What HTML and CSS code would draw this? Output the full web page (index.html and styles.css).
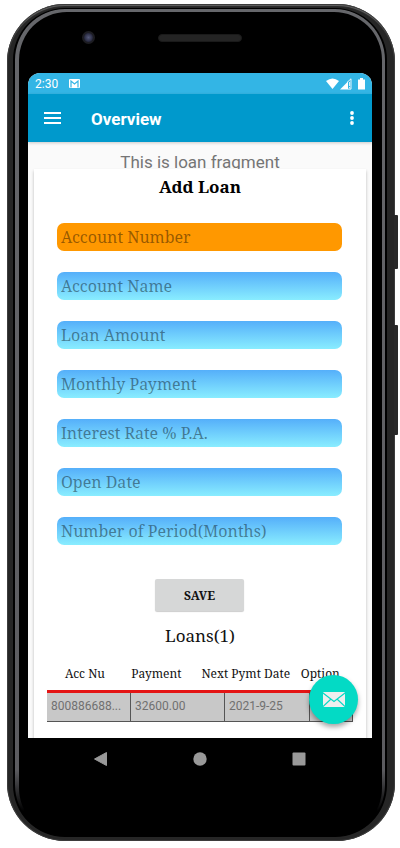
FILE: index.html
```html
<!DOCTYPE html>
<html lang="en">
<head>
<meta charset="utf-8">
<meta name="viewport" content="width=device-width, initial-scale=1">
<title>Overview</title>
<link rel="stylesheet" href="styles.css">
</head>
<body>
<div class="phone">
  <span class="side-key power"></span>
  <span class="side-key volume"></span>
  <div class="rim">
    <div class="face">
      <div class="sensors">
        <span class="camera"></span>
        <span class="speaker"></span>
      </div>
      <div class="screen">
        <div class="status-bar">
          <span>2:30</span>
          <svg class="mail-note" width="11" height="9" viewBox="0 0 11 9"><rect width="11" height="9" rx="1" fill="#fff"/><path d="M2 8.500V2l3.500 3L9 2v6.500" fill="none" stroke="#33b5e5" stroke-width="1.200"/></svg>
          <svg class="status-icons" width="39" height="12" viewBox="0 0 39 12" fill="#fff"><path d="M0 3Q6.500-2 13 3L6.500 11z"/><path d="M14 11.500L22 3.500v8z"/><path d="M21 4.500L25 .8v10.300h-3" fill="none" stroke="#fff" stroke-width=".9"/><path d="M23.200 4h.9v4h-.9zM23.200 9h.9v1.200h-.9z"/><path d="M32 1.500h2V0h3v1.500h2v10h-7z"/></svg>
        </div>
        <header class="app-bar">
          <button class="icon-button" aria-label="Open menu"><svg width="17" height="12" viewBox="0 0 17 12" fill="#fff"><path d="M0 0h17v2H0zM0 5h17v2H0zM0 10h17v2H0z"/></svg></button>
          <h1>Overview</h1>
          <button class="icon-button more" aria-label="More options"><svg width="4" height="14" viewBox="0 0 4 14" fill="#fff"><circle cx="2" cy="2" r="1.900"/><circle cx="2" cy="7" r="1.900"/><circle cx="2" cy="12" r="1.900"/></svg></button>
        </header>
        <main>
          <p class="fragment-label">This is loan fragment</p>
          <section class="card">
            <h2>Add Loan</h2>
            <form class="loan-form">
              <input class="field selected" type="text" aria-label="Account Number" placeholder="Account Number">
              <input class="field" type="text" aria-label="Account Name" placeholder="Account Name">
              <input class="field" type="text" aria-label="Loan Amount" placeholder="Loan Amount">
              <input class="field" type="text" aria-label="Monthly Payment" placeholder="Monthly Payment">
              <input class="field" type="text" aria-label="Interest Rate % P.A." placeholder="Interest Rate % P.A.">
              <input class="field" type="text" aria-label="Open Date" placeholder="Open Date">
              <input class="field" type="text" aria-label="Number of Period(Months)" placeholder="Number of Period(Months)">
              <button class="save" type="button">SAVE</button>
            </form>
            <h3>Loans(1)</h3>
            <table>
              <thead><tr><th>Acc Nu</th><th>Payment</th><th>Next Pymt Date</th><th>Option</th></tr></thead>
              <tbody><tr><td>800886688...</td><td>32600.00</td><td>2021-9-25</td><td></td></tr></tbody>
            </table>
          </section>
          <button class="fab" aria-label="Send mail"><svg width="22" height="15" viewBox="0 0 22 15"><rect width="22" height="15" rx="1" fill="#eee"/><path d="M0 1l11 8.500L22 1M0 14.500l8-7.500M22 14.500L14 7" fill="none" stroke="#03dac5" stroke-width="1.200"/></svg></button>
        </main>
      </div>
      <nav class="nav-bar">
        <button aria-label="Back"><svg width="14" height="14" viewBox="0 0 14 14"><path d="M.5 7L12.500.5v13z" fill="#999" stroke="#999" stroke-linejoin="round"/></svg></button>
        <button aria-label="Home"><svg width="14" height="14" viewBox="0 0 14 14"><circle cx="7" cy="7" r="6.700" fill="#999"/></svg></button>
        <button aria-label="Recent apps"><svg width="14" height="14" viewBox="0 0 14 14"><rect width="13" height="13" x=".5" y=".5" rx="1" fill="#999"/></svg></button>
      </nav>
    </div>
  </div>
</div>
</body>
</html>
```
FILE: styles.css
```css
* { box-sizing: border-box; }

body {
  margin: 0;
  padding: 4px 5px 7px 7px;
  background: #fff;
  font-family: Roboto, sans-serif;
}

h1, h2, h3, p { margin: 0; }

button {
  border: 0;
  padding: 0;
  background: none;
  font: inherit;
  color: inherit;
  cursor: pointer;
}

svg { display: block; }

.phone {
  position: relative;
  padding: 4px 8px 4px 6px;
  border-radius: 58px;
  background: #262626;
  box-shadow: inset 0 0 0 1px #3c3c3c, inset 0 2px 1px #666;
}

.side-key {
  position: absolute;
  right: -3px;
  width: 4px;
  background: #292929;
  border-radius: 0 1px 1px 0;
}

.power { top: 211px; height: 54px; }
.volume { top: 321px; height: 110px; }

.rim {
  border-radius: 52px;
  border: 1px solid #000;
  border-width: 1px 2px;
  padding: 3px 3px 0 4px;
  background: linear-gradient(#66676b, #5c5c60 92%, #000 97%);
}

.face {
  border-radius: 48px;
  background: #000;
  padding: 0 10px 0 9px;
}

.sensors {
  display: grid;
  grid-template-columns: 1fr 84px 1fr;
  align-items: center;
  height: 61px;
  padding-bottom: 10px;
}

.camera {
  width: 13px;
  height: 13px;
  margin-left: 54px;
  border: 2px solid #1d1d22;
  border-radius: 50%;
  background: radial-gradient(#55597a, #25273c 70%);
}

.speaker {
  height: 8px;
  border-radius: 4px;
  background: #242424;
  border: 1px solid #1a1a1a;
}

.screen {
  overflow: hidden;
  border-radius: 12px 12px 0 0;
  background: #fafafa;
}

.status-bar {
  display: flex;
  align-items: center;
  height: 21px;
  padding: 0 7px;
  background: #33b5e5;
  color: #fff;
  font-size: 12px;
}

.mail-note { margin-left: 11px; }
.status-icons { margin-left: auto; }

.app-bar {
  position: relative;
  display: flex;
  align-items: center;
  height: 48px;
  padding: 0 16px;
  background: #0099cc;
  color: #fff;
  box-shadow: 0 1px 3px rgba(0, 0, 0, .2);
}

.app-bar h1 {
  margin-left: 30px;
  padding-top: 2px;
  font-size: 17px;
  font-weight: 700;
  line-height: 20px;
}

.icon-button { padding: 4px 0; }
.more { margin-left: auto; padding: 4px 2px; }

main { position: relative; }

.fragment-label {
  height: 27px;
  padding-top: 10px;
  overflow: hidden;
  text-align: center;
  font-size: 17px;
  line-height: 20px;
  color: #757575;
}

.card {
  margin: 0 6px;
  padding: 6px 13px 16px;
  background: #fff;
  box-shadow: 0 2px 3px rgba(0, 0, 0, .25);
  font-family: "Noto Serif", "DejaVu Serif Condensed", "DejaVu Serif", serif;
  color: #111;
}

h2, h3 {
  text-align: center;
  font-size: 17px;
  line-height: 24px;
}

h2 { color: #000; }
h3 { font-weight: 400; }

.loan-form {
  display: flex;
  flex-direction: column;
  gap: 21px;
  padding: 24px 11px 13px 10px;
}

.field {
  width: 100%;
  height: 28px;
  padding: 0 4px;
  border: 0;
  border-radius: 7px;
  background: linear-gradient(#55affa, #89edff);
  font-family: inherit;
  font-size: 16px;
  color: #222;
}

.field::placeholder { color: rgba(0, 0, 0, .42); opacity: 1; }
.field.selected { background: #ff9800; }

.save {
  align-self: center;
  width: 89px;
  height: 32px;
  margin-top: 13px;
  border-radius: 2px;
  background: #d6d7d7;
  box-shadow: 0 1px 1px rgba(0, 0, 0, .2);
  font-size: 12px;
  font-weight: 700;
}

table {
  display: block;
  margin-top: 12px;
}

thead, tbody { display: block; }

thead tr {
  display: grid;
  grid-template-columns: 66fr 70fr 99fr 52fr;
  padding-left: 18px;
  border-bottom: 3px solid #e41414;
}

th {
  padding: 5px 0 7px;
  text-align: left;
  white-space: nowrap;
  font-size: 12px;
  font-weight: 400;
  line-height: 18px;
}

tbody tr {
  display: grid;
  grid-template-columns: 84fr 94fr 85fr 43fr;
  background: #c8c8c8;
  border-bottom: 1px solid #555;
}

td {
  height: 28px;
  padding: 0 4px;
  border-right: 1px solid #555;
  font-family: Roboto, sans-serif;
  font-size: 12px;
  line-height: 26px;
  color: #707070;
}

.fab {
  position: absolute;
  right: 14px;
  bottom: 14px;
  display: grid;
  place-items: center;
  width: 49px;
  height: 49px;
  border-radius: 50%;
  background: #03dac5;
  box-shadow: 0 3px 5px rgba(0, 0, 0, .35);
}

.nav-bar {
  display: grid;
  grid-template-columns: repeat(3, 99px);
  justify-content: center;
  justify-items: center;
  align-items: start;
  height: 98px;
  padding-top: 14px;
}
```
